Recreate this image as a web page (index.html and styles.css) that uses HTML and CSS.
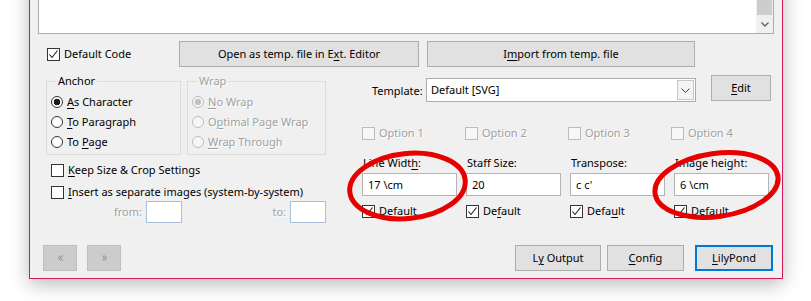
FILE: index.html
```html
<!DOCTYPE html>
<html lang="en">
<head>
  <meta charset="UTF-8" />
  <title>OOoLilyPond</title>
  <link rel="stylesheet" href="styles.css">
</head>
<body>
  <svg width="0" height="0" class="defs">
    <symbol id="tick" viewBox="0 0 11 11">
      <path d="M1.5 5.5 L4 8.5 L9.5 1.5" fill="none" stroke="#1e1e1e" stroke-width="1.1"/>
    </symbol>
  </svg>

  <div class="dialog">
    <div class="code-box">
      <div class="scrollbar">
        <div class="thumb"></div>
        <div class="scroll-arrow">
          <svg width="8" height="5" viewBox="0 0 8 5"><path d="M0.5 0.5 L4 4 L7.5 0.5" fill="none" stroke="#606060" stroke-width="1.3"/></svg>
        </div>
      </div>
    </div>

    <div class="toolbar">
      <label class="check default-code"><span class="box"><svg><use href="#tick"/></svg></span><span>Default Code</span></label>
      <button class="btn open-btn">Open as temp. file in E<u>x</u>t. Editor</button>
      <button class="btn import-btn">I<u>m</u>port from temp. file</button>
    </div>

    <div class="settings">
      <div class="left-col">
        <div class="groups">
          <div class="group anchor">
            <span class="legend">Anchor</span>
            <label class="radio"><span class="dot on"></span><span><u>A</u>s Character</span></label>
            <label class="radio"><span class="dot"></span><span><u>T</u>o Paragraph</span></label>
            <label class="radio"><span class="dot"></span><span>To <u>P</u>age</span></label>
          </div>
          <div class="group wrap off">
            <span class="legend">Wrap</span>
            <label class="radio"><span class="dot on"></span><span><u>N</u>o Wrap</span></label>
            <label class="radio"><span class="dot"></span><span>O<u>p</u>timal Page Wrap</span></label>
            <label class="radio"><span class="dot"></span><span><u>W</u>rap Through</span></label>
          </div>
        </div>
        <label class="check check-row first"><span class="box"></span><span><u>K</u>eep Size &amp; Crop Settings</span></label>
        <label class="check check-row"><span class="box"></span><span><u>I</u>nsert as separate images (system-by-system)</span></label>
        <div class="range">
          <span class="range-label">from:</span><span class="input small"></span>
          <span class="range-label to">to:</span><span class="input small"></span>
        </div>
      </div>

      <div class="right-col">
        <div class="template-row">
          <span class="template-label">Template:</span>
          <div class="combo">
            <span class="combo-text">Default [SVG]</span>
            <span class="combo-btn">
              <svg width="9" height="5" viewBox="0 0 9 5"><path d="M0.5 0.5 L4.5 4.5 L8.5 0.5" fill="none" stroke="#404040" stroke-width="1"/></svg>
            </span>
          </div>
          <button class="btn edit-btn"><u>E</u>dit</button>
        </div>

        <div class="options">
          <label class="check off"><span class="box"></span><span>Option 1</span></label>
          <label class="check off"><span class="box"></span><span>Option 2</span></label>
          <label class="check off"><span class="box"></span><span>Option 3</span></label>
          <label class="check off"><span class="box"></span><span>Option 4</span></label>
        </div>

        <div class="fields">
          <div class="field">
            <div class="field-label">Line Widt<u>h</u>:</div>
            <div class="input">17 \cm</div>
            <label class="check"><span class="box"><svg><use href="#tick"/></svg></span><span><u>D</u>efault</span></label>
          </div>
          <div class="field">
            <div class="field-label">Staff Size:</div>
            <div class="input">20</div>
            <label class="check"><span class="box"><svg><use href="#tick"/></svg></span><span>De<u>f</u>ault</span></label>
          </div>
          <div class="field">
            <div class="field-label">Transpose:</div>
            <div class="input">c c'</div>
            <label class="check"><span class="box"><svg><use href="#tick"/></svg></span><span>Defa<u>u</u>lt</span></label>
          </div>
          <div class="field">
            <div class="field-label">Image height:</div>
            <div class="input">6 \cm</div>
            <label class="check"><span class="box"><svg><use href="#tick"/></svg></span><span>Default</span></label>
          </div>
        </div>
      </div>
    </div>

    <div class="footer">
      <div class="nav">
        <button class="btn nav-btn" disabled>
          <svg width="5" height="6" viewBox="0 0 5 6"><path d="M2.5 0.5 L0.5 3 L2.5 5.5 M4.5 0.5 L2.5 3 L4.5 5.5" fill="none" stroke="#8c8c8c" stroke-width="1"/></svg>
        </button>
        <button class="btn nav-btn" disabled>
          <svg width="5" height="6" viewBox="0 0 5 6"><path d="M0.5 0.5 L2.5 3 L0.5 5.5 M2.5 0.5 L4.5 3 L2.5 5.5" fill="none" stroke="#8c8c8c" stroke-width="1"/></svg>
        </button>
      </div>
      <div class="actions">
        <button class="btn ly-btn">L<u>y</u> Output</button>
        <button class="btn config-btn"><u>C</u>onfig</button>
        <button class="btn lily-btn"><u>L</u>ilyPond</button>
      </div>
    </div>
  </div>

  <!-- hand-drawn highlight marks -->
  <svg class="marks" width="811" height="301" viewBox="0 0 811 301">
    <ellipse cx="407.5" cy="186" rx="58" ry="32.5" transform="rotate(-6 407.5 186)" fill="none" stroke="#e60000" stroke-width="5"/>
    <ellipse cx="716.5" cy="185" rx="62" ry="31.5" transform="rotate(-8 716.5 185)" fill="none" stroke="#e60000" stroke-width="5"/>
  </svg>
</body>
</html>
```

FILE: styles.css
```css
* {
  box-sizing: border-box;
}

body {
  margin: 0;
  width: 811px;
  height: 301px;
  overflow: hidden;
  position: relative;
  background: #fff;
  font-family: "Noto Sans", sans-serif;
  font-size: 11px;
  line-height: 16px;
  color: #000;
}

.defs {
  position: absolute;
}

u {
  text-decoration-thickness: 1px;
  text-underline-offset: 2px;
}

.dialog {
  display: flex;
  flex-direction: column;
  width: 754px;
  height: 319px;
  margin: -40px 0 0 29px;
  padding: 10px 8px 7px 8px;
  background: #f0f0f0;
  border: 1px solid #d3195d;
  box-shadow: 0 5px 18px rgba(0, 0, 0, 0.28);
}

/* code editor */
.code-box {
  flex: none;
  height: 63px;
  display: flex;
  justify-content: flex-end;
  background: #fff;
  border: 1px solid #ababab;
}

.scrollbar {
  width: 17px;
  display: flex;
  flex-direction: column;
  background: #f0f0f0;
}

.thumb {
  height: 43px;
  margin: 0 1px;
  background: #cdcdcd;
}

.scroll-arrow {
  flex: 1;
  display: flex;
  align-items: center;
  justify-content: center;
}

/* controls */
.btn {
  height: 26px;
  padding: 0;
  font: inherit;
  color: #000;
  background: #e1e1e1;
  border: 1px solid #adadad;
}

.check,
.radio {
  display: flex;
  align-items: center;
  gap: 4px;
  white-space: nowrap;
}

.box {
  flex: none;
  width: 13px;
  height: 13px;
  display: flex;
  align-items: center;
  justify-content: center;
  background: #fff;
  border: 1px solid #333;
}

.box svg {
  width: 11px;
  height: 11px;
}

.dot {
  flex: none;
  width: 12px;
  height: 12px;
  border-radius: 50%;
  background: #fff;
  border: 1px solid #333;
}

.dot.on {
  background: radial-gradient(circle, #1a1a1a 0 3px, #fff 3.6px);
}

.off {
  color: #a0a0a0;
  text-shadow: 1px 1px 0 #fff;
}

.off .box,
.off .dot {
  border-color: #bcbcbc;
  background-color: #f7f7f7;
}

.off .dot.on {
  background: radial-gradient(circle, #c2c2c2 0 3px, #f7f7f7 3.6px);
}

.input {
  height: 23px;
  padding: 0 5px;
  display: flex;
  align-items: center;
  background: #fff;
  border: 1px solid #b4b4b4;
}

/* toolbar row */
.toolbar {
  flex: none;
  display: flex;
  align-items: center;
  margin-top: 7px;
}

.default-code {
  width: 132px;
  margin-left: 9px;
}

.open-btn {
  width: 240px;
}

.import-btn {
  width: 268px;
  margin-left: 8px;
}

/* settings */
.settings {
  display: flex;
}

.left-col {
  width: 280px;
  margin-left: 8px;
}

.groups {
  display: flex;
  gap: 6px;
  margin-top: 14px;
}

.group {
  position: relative;
  height: 74px;
  padding: 10px 0 2px 4px;
  border: 1px solid #dcdcdc;
}

.group.anchor {
  width: 135px;
}

.group.wrap {
  width: 139px;
}

.legend {
  position: absolute;
  top: -9px;
  left: 9px;
  padding: 0 2px;
  background: #f0f0f0;
}

.radio {
  height: 20px;
}

.check-row {
  height: 22px;
  margin-left: 5px;
}

.check-row.first {
  margin-top: 4px;
}

.range {
  display: flex;
  align-items: center;
  margin-top: -2px;
  color: #a0a0a0;
  text-shadow: 1px 1px 0 #fff;
}

.range-label {
  width: 96px;
  margin-right: 4px;
  text-align: right;
}

.range-label.to {
  width: 104px;
}

.input.small {
  width: 36px;
  height: 22px;
  border-color: #a9bed8;
}

.right-col {
  width: 412px;
  margin-left: 36px;
}

.template-row {
  display: flex;
  align-items: flex-start;
  margin-top: 8px;
  height: 26px;
}

.template-label {
  width: 54px;
  margin: 8px 0 0 10px;
}

.combo {
  width: 270px;
  height: 24px;
  margin-top: 3px;
  padding: 1px 1px 1px 4px;
  display: flex;
  align-items: center;
  background: #fff;
  border: 1px solid #acacac;
}

.combo-text {
  flex: 1;
}

.combo-btn {
  width: 17px;
  height: 20px;
  display: flex;
  align-items: center;
  justify-content: center;
  background: #f4f4f4;
  border: 1px solid #c8c8c8;
}

.edit-btn {
  width: 60px;
  margin-left: 15px;
}

.options {
  display: flex;
  height: 16px;
  margin-top: 24px;
}

.options .check {
  width: 104px;
}

.fields {
  display: flex;
  gap: 9px;
  margin-top: 14px;
}

.field {
  width: 95px;
}

.field-label {
  padding-left: 1px;
}

.field .input {
  margin-top: 2px;
}

.field .check {
  height: 16px;
  margin-top: 7px;
}

/* footer */
.footer {
  display: flex;
  justify-content: space-between;
  margin-top: auto;
  padding: 0 1px 0 5px;
}

.nav {
  display: flex;
  gap: 10px;
}

.nav-btn {
  width: 34px;
  display: flex;
  align-items: center;
  justify-content: center;
  background: #cccccc;
  border-color: #bfbfbf;
}

.actions {
  display: flex;
}

.ly-btn {
  width: 86px;
}

.config-btn {
  width: 77px;
  margin-left: 6px;
}

.lily-btn {
  width: 78px;
  margin-left: 11px;
  border: 2px solid #0078d7;
}

.marks {
  position: absolute;
  top: 0;
  left: 0;
  pointer-events: none;
}
```
